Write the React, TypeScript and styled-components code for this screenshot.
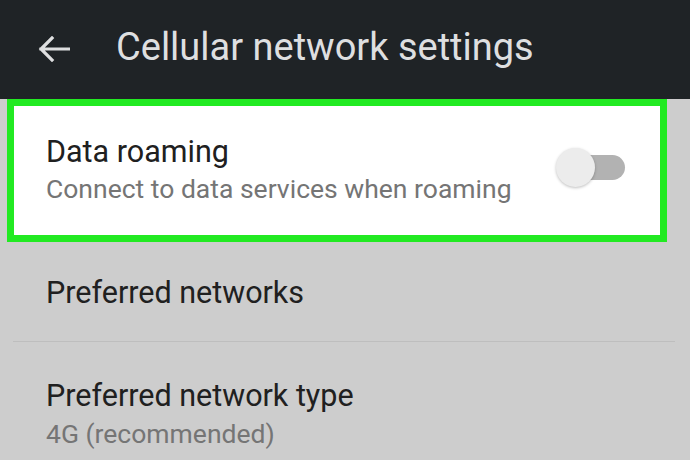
import React from 'react';
import styled, { createGlobalStyle } from 'styled-components';

const GlobalStyle = createGlobalStyle`
  html, body {
    margin: 0;
    padding: 0;
    background: #cdcdcd;
  }
  body {
    font-family: Roboto, "Liberation Sans", sans-serif;
  }
`;

const Screen = styled.div`
  width: 690px;
  height: 460px;
  overflow: hidden;
  background: #cdcdcd;
`;

const Header = styled.header`
  height: 99px;
  display: flex;
  align-items: center;
  padding-left: 38px;
  background: #1f2326;
  box-sizing: border-box;
`;

const BackButton = styled.button`
  display: flex;
  margin-bottom: 2px;
  padding: 0;
  border: 0;
  background: none;
  cursor: pointer;
`;

const Title = styled.h1`
  margin: 0 0 0 46px;
  padding-bottom: 6px;
  font-size: 38px;
  line-height: 44px;
  font-weight: 400;
  color: #dedfe0;
`;

const Highlight = styled.section`
  margin: 0 23px 0 7px;
  height: 143px;
  box-sizing: border-box;
  border: 7px solid #22ea22;
  background: #ffffff;
  display: flex;
  align-items: center;
  justify-content: space-between;
  padding: 0 35px 2px 32px;
`;

const TextBlock = styled.div`
  display: flex;
  flex-direction: column;
`;

const ItemTitle = styled.div`
  font-size: 30.5px;
  line-height: 36px;
  color: #202020;
`;

const ItemSub = styled.div<{ $gap: number }>`
  margin-top: ${(p) => p.$gap}px;
  font-size: 26.5px;
  line-height: 34px;
  color: #757575;
`;

const Row = styled.div<{ $height: number; $top: number }>`
  height: ${(p) => p.$height}px;
  box-sizing: border-box;
  padding: ${(p) => p.$top}px 0 0 46px;
`;

const Divider = styled.hr`
  margin: 0 15px 0 13px;
  border: 0;
  height: 1px;
  background: #bebebe;
`;

const Track = styled.div`
  position: relative;
  width: 50px;
  height: 25px;
  margin-bottom: 4px;
  border-radius: 13px;
  background: #b2b2b2;
`;

const Knob = styled.div`
  position: absolute;
  left: -19px;
  top: -7px;
  width: 39px;
  height: 39px;
  border-radius: 50%;
  background: #ececec;
  box-shadow: 0 1px 3px rgba(0, 0, 0, 0.25);
`;

const BackArrow = () => (
  <svg width="32" height="26" viewBox="0 0 32 26" fill="none">
    <path
      d="M31 13H3M14 2L3 13l11 11"
      stroke="#dedfe0"
      strokeWidth="3.2"
      strokeLinecap="square"
    />
  </svg>
);

export default function App() {
  return (
    <Screen>
      <GlobalStyle />
      <Header>
        <BackButton aria-label="Back">
          <BackArrow />
        </BackButton>
        <Title>Cellular network settings</Title>
      </Header>
      <Highlight>
        <TextBlock>
          <ItemTitle>Data roaming</ItemTitle>
          <ItemSub $gap={2}>Connect to data services when roaming</ItemSub>
        </TextBlock>
        <Track>
          <Knob />
        </Track>
      </Highlight>
      <Row $height={99} $top={33}>
        <ItemTitle>Preferred networks</ItemTitle>
      </Row>
      <Divider />
      <Row $height={118} $top={36}>
        <ItemTitle>Preferred network type</ItemTitle>
        <ItemSub $gap={3}>4G (recommended)</ItemSub>
      </Row>
    </Screen>
  );
}
